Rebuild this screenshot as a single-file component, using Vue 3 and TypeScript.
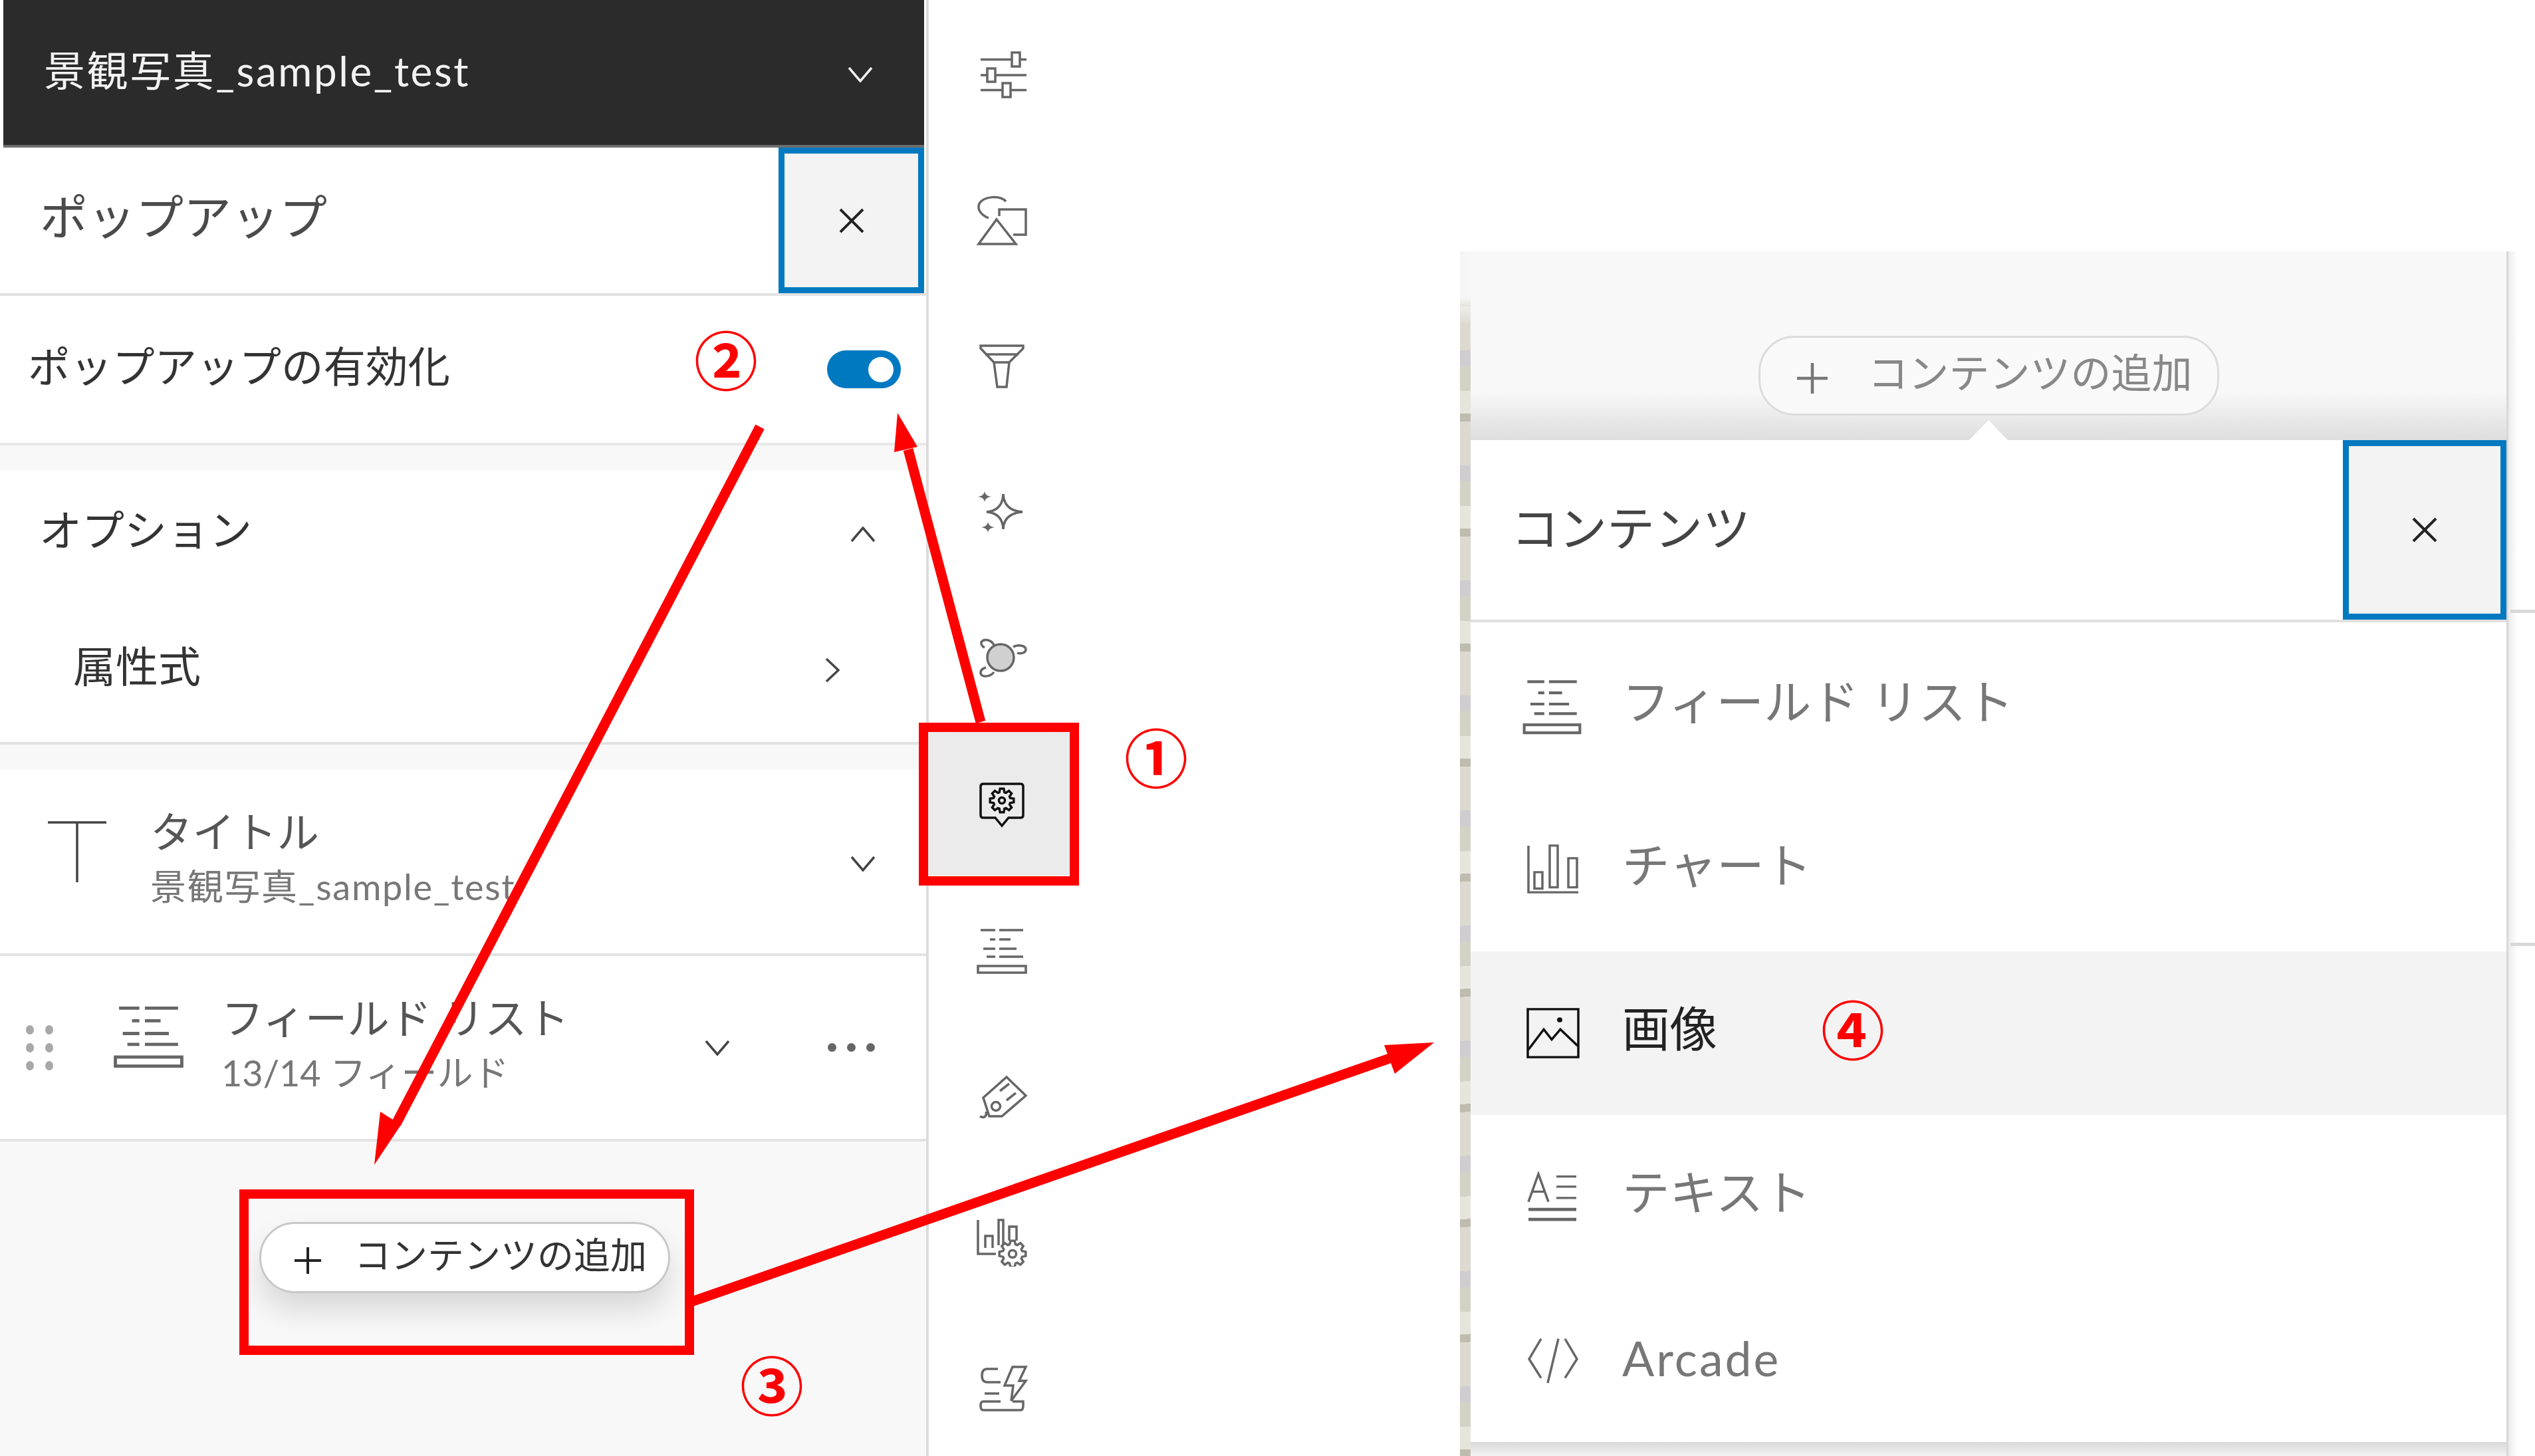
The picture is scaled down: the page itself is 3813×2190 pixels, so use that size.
<script setup lang="ts">
function gear(cx: number, cy: number, outer: number, inner: number, teeth = 8) {
  const pts: string[] = []
  const step = (Math.PI * 2) / teeth
  for (let i = 0; i < teeth; i++) {
    const a = i * step
    const corners = [
      [a - step * 0.38, inner],
      [a - step * 0.2, outer],
      [a + step * 0.2, outer],
      [a + step * 0.38, inner]
    ]
    for (const [t, r] of corners) {
      pts.push(`${(cx + Math.cos(t) * r).toFixed(1)},${(cy + Math.sin(t) * r).toFixed(1)}`)
    }
  }
  return pts.join(' ')
}

const listIcon = `
  <path d="M8 12H30M36 12H72M22 26H30M36 26H53M12 40H30M36 40H62M17 52H30M36 52H72" />
  <rect x="4" y="66" width="72" height="10" />`

const chartGearIcon = `
  <path d="M4 10V61H31M15 52V34H26V52M35 48V10H42V48M51 41V20H62V41" />
  <polygon points="${gear(56, 61, 20, 15)}" />
  <circle cx="56" cy="61" r="5.5" />`

const popupIcon = `
  <path d="M12 11H68Q72 11 72 15V58Q72 62 68 62H50L40 74L30 62H12Q8 62 8 58V15Q8 11 12 11Z" />
  <polygon points="${gear(40, 36, 18, 13)}" />
  <circle cx="40" cy="36" r="4.5" fill="currentColor" />`

const railIcons = [
  {
    name: 'settings',
    svg: `<path d="M8 16.5H55M67 16.5H77M8 40H18M30 40H77M8 62.5H41M53 62.5H77" />
      <rect x="55" y="6" width="12" height="21" /><rect x="18" y="30" width="12" height="20" /><rect x="41" y="52" width="12" height="21" />`
  },
  {
    name: 'symbology',
    svg: `<path d="M46 11C38 2 14 2 6 14C2 24 10 32 20 36" />
      <path d="M32 38L61 75H5Z" /><path d="M36 33V23H76V61H57" />`
  },
  {
    name: 'filter',
    svg: `<path d="M8 9H72V13L51 34L47 71H33L28 34L8 13Z" /><path d="M15 22H65M28 34H51" />`
  },
  {
    name: 'effects',
    svg: `<path d="M42 13Q43 38 71 40Q43 42 42 66Q41 42 17 40Q41 38 42 13Z" />
      <path class="solid" d="M14 9Q15 16 24 17Q15 18 14 25Q13 18 4 17Q13 16 14 9ZM19 55Q20 62 29 63Q20 64 19 71Q18 64 9 63Q18 62 19 55Z" />`
  },
  {
    name: 'cluster',
    svg: `<circle class="tint" cx="38" cy="40" r="20" />
      <path d="M28 21C24 13 12 11 9 17C8 21 12 24 14 25M57 24C65 20 76 22 76 28C76 33 68 35 63 33M28 62C22 70 8 70 8 63C8 58 12 56 16 55" />`
  },
  { name: 'popup', svg: popupIcon, active: true },
  { name: 'fields', svg: listIcon },
  {
    name: 'labels',
    svg: `<path d="M47 14L76 42L40 73H21L12 45Z" /><circle cx="31" cy="58" r="6.5" />
      <path d="M37 35L51 24M47 49L61 38M16 66C18 74 12 76 7 73" />`
  },
  { name: 'charts', svg: chartGearIcon },
  {
    name: 'forms',
    svg: `<path d="M34 15H18Q10 15 10 25Q10 35 18 35H38M14 52H36M38 64H12Q8 64 8 70Q8 77 12 77H68Q72 77 72 70V64H56" />
      <path d="M56 12H76L66 33H76L54 63L57 40H44Z" />`
  }
]

const menuItems = [
  {
    label: 'フィールド リスト',
    svg: listIcon,
    iconClass: 'menu-icon-list'
  },
  {
    label: 'チャート',
    svg: `<path d="M3 2V76H78M12 70V44H24V70ZM35 68V2H47V68ZM63 68V22H76V68Z" />`
  },
  {
    label: '画像',
    svg: `<rect x="2" y="2" width="76" height="76" /><path d="M3 66L26 34L38 50L51 34L77 60" /><circle class="solid" cx="50" cy="19" r="4" />`,
    active: true
  },
  {
    label: 'テキスト',
    svg: `<path d="M3 48L18 4L33 48M9 32H27M45 8H75M45 24H75M45 42H75" /><path class="thick" d="M3 60H75M3 76H75" />`
  },
  {
    label: 'Arcade',
    svg: `<path d="M22 6L4 38L22 68M58 6L76 38L58 68M48 6L32 76" />`,
    latin: true
  }
]

const numerals = [
  { text: '①', x: 1739, y: 1136 },
  { text: '②', x: 1092, y: 538 },
  { text: '③', x: 1161, y: 2080 },
  { text: '④', x: 2787, y: 1545 }
]

function numeralStyle(n: { x: number; y: number }) {
  return { left: `${n.x - 60}px`, top: `${n.y - 60}px` }
}
</script>

<template>
  <div class="page">
    <aside class="left-panel">
      <header class="layer-head">
        <span>景観写真_sample_test</span>
        <svg class="chevron light" viewBox="0 0 38 24" preserveAspectRatio="none"><path d="M2 2L19 22L36 2" /></svg>
      </header>

      <div class="panel-title">
        <h2>ポップアップ</h2>
        <button class="close-btn">
          <svg viewBox="0 0 38 38"><path d="M2 2L36 36M36 2L2 36" /></svg>
        </button>
      </div>

      <div class="toggle-row">
        <span>ポップアップの有効化</span>
        <div class="toggle"><i></i></div>
      </div>

      <div class="band"></div>

      <div class="options-row">
        <span>オプション</span>
        <svg class="chevron" viewBox="0 0 38 24" preserveAspectRatio="none"><path d="M2 22L19 2L36 22" /></svg>
      </div>
      <div class="expr-row">
        <span>属性式</span>
        <svg class="chevron-right" viewBox="0 0 22 38" preserveAspectRatio="none"><path d="M2 2L20 19L2 36" /></svg>
      </div>

      <div class="band"></div>

      <div class="title-row">
        <svg class="t-icon" viewBox="0 0 88 92" preserveAspectRatio="none"><path d="M0 2H88M44 2V92" /></svg>
        <div class="two-line">
          <div class="main-line">タイトル</div>
          <div class="sub-line">景観写真_sample_test</div>
        </div>
        <svg class="chevron" viewBox="0 0 38 24" preserveAspectRatio="none"><path d="M2 2L19 22L36 2" /></svg>
      </div>

      <div class="field-row">
        <div class="grip"><i v-for="n in 6" :key="n"></i></div>
        <svg class="field-icon icon" viewBox="0 0 80 80" preserveAspectRatio="none" v-html="listIcon"></svg>
        <div class="two-line">
          <div class="main-line">フィールド リスト</div>
          <div class="sub-line">13/14 フィールド</div>
        </div>
        <svg class="chevron field-chevron" viewBox="0 0 38 24" preserveAspectRatio="none"><path d="M2 2L19 22L36 2" /></svg>
        <div class="more"><i></i><i></i><i></i></div>
      </div>

      <div class="left-footer">
        <button class="add-btn">
          <svg viewBox="0 0 40 40"><path d="M20 0V40M0 20H40" /></svg>
          <span>コンテンツの追加</span>
        </button>
      </div>
    </aside>

    <nav class="rail">
      <div
        v-for="item in railIcons"
        :key="item.name"
        class="rail-cell"
        :class="{ active: item.active }"
      >
        <svg class="icon" viewBox="0 0 80 80" width="80" height="80" v-html="item.svg"></svg>
      </div>
    </nav>

    <section class="right">
      <div class="map-strip"></div>
      <div class="right-main">
        <div class="add-area">
          <button class="add-btn faded">
            <svg viewBox="0 0 40 40"><path d="M20 0V40M0 20H40" /></svg>
            <span>コンテンツの追加</span>
          </button>
          <div class="notch"></div>
        </div>
        <div class="popover-head">
          <h2>コンテンツ</h2>
          <button class="close-btn">
            <svg viewBox="0 0 38 38"><path d="M2 2L36 36M36 2L2 36" /></svg>
          </button>
        </div>
        <ul class="menu">
          <li v-for="m in menuItems" :key="m.label" :class="{ active: m.active, latin: m.latin }">
            <svg class="icon" :class="m.iconClass" viewBox="0 0 80 80" preserveAspectRatio="none" v-html="m.svg"></svg>
            <span>{{ m.label }}</span>
          </li>
        </ul>
        <div class="menu-end"></div>
      </div>
      <div class="gutter"><i></i><i></i></div>
    </section>

    <!-- red annotations drawn on top of the screenshot -->
    <svg class="marks" viewBox="0 0 3813 2190" width="3813" height="2190">
      <g fill="none" stroke="#ff0000">
        <rect x="1389" y="1094" width="227" height="231" stroke-width="14" />
        <rect x="367" y="1796" width="670" height="235" stroke-width="14" />
        <path d="M1475 1086L1366 676" stroke-width="15" />
        <path d="M1143 642L596 1690" stroke-width="15" />
        <path d="M1040 1958L2090 1592" stroke-width="15" />
      </g>
      <g fill="#ff0000">
        <polygon points="1350,621 1380,672 1345,680" />
        <polygon points="563,1752 572,1672 603,1692" />
        <polygon points="2157,1568 2098,1615 2082,1572" />
      </g>
    </svg>
    <span v-for="n in numerals" :key="n.text" class="numeral" :style="numeralStyle(n)">{{ n.text }}</span>
  </div>
</template>

<style scoped>
.page {
  position: relative;
  width: 3813px;
  height: 2190px;
  display: flex;
  overflow: hidden;
  background: #fff;
  font-family: Lato, "Noto Sans CJK JP", sans-serif;
  color: #4a4a4a;
}

h2 {
  margin: 0;
  font-weight: 400;
  font-size: 72px;
}

button {
  font-family: inherit;
  cursor: pointer;
}

/* left panel */
.left-panel {
  width: 1397px;
  height: 2190px;
  box-sizing: border-box;
  border-right: 4px solid #dcdcdc;
  display: flex;
  flex-direction: column;
  flex: none;
}

.layer-head {
  height: 222px;
  box-sizing: border-box;
  margin: 0 3px 0 5px;
  padding: 0 77px 0 61px;
  display: flex;
  align-items: center;
  justify-content: space-between;
  background: #2b2b2b;
  border-bottom: 4px solid #6e6e6e;
  color: #f2f2f2;
  font-size: 62px;
  letter-spacing: 2.6px;
}

.layer-head span {
  padding-bottom: 12px;
}

.layer-head .chevron {
  margin-top: 6px;
}

.chevron {
  width: 38px;
  height: 24px;
  flex: none;
}

.chevron path,
.chevron-right path,
.t-icon path {
  fill: none;
  stroke: #444;
  stroke-width: 3.5;
}

.chevron.light path {
  stroke: #f2f2f2;
}

.chevron-right {
  width: 22px;
  height: 38px;
}

.panel-title {
  height: 223px;
  box-sizing: border-box;
  border-bottom: 4px solid #e2e2e2;
  padding-left: 60px;
  display: flex;
  align-items: center;
  justify-content: space-between;
}

.panel-title h2 {
  padding-bottom: 20px;
}

.close-btn {
  height: 100%;
  width: 219px;
  box-sizing: border-box;
  margin-right: 3px;
  padding: 0;
  background: #f3f3f3;
  border: 9px solid #0079c1;
  display: flex;
  align-items: center;
  justify-content: center;
  flex: none;
}

.close-btn svg {
  width: 38px;
  height: 38px;
}

.close-btn path {
  fill: none;
  stroke: #222;
  stroke-width: 4;
}

.toggle-row {
  height: 225px;
  box-sizing: border-box;
  border-bottom: 4px solid #e8e8e8;
  padding: 0 38px 0 42px;
  display: flex;
  align-items: center;
  justify-content: space-between;
  font-size: 63.5px;
  color: #333;
}

.toggle-row span {
  padding-bottom: 18px;
}

.toggle {
  width: 111px;
  height: 57px;
  padding-right: 11px;
  box-sizing: border-box;
  border-radius: 29px;
  background: #0079c1;
  display: flex;
  align-items: center;
  justify-content: flex-end;
}

.toggle i {
  width: 38px;
  height: 38px;
  border-radius: 50%;
  background: #fff;
}

.band {
  height: 38px;
  background: #f8f8f8;
  flex: none;
}

.options-row {
  height: 192px;
  box-sizing: border-box;
  padding: 0 76px 0 59px;
  display: flex;
  align-items: center;
  justify-content: space-between;
  font-size: 64px;
  color: #333;
}

.options-row span {
  padding-bottom: 22px;
}

.expr-row {
  height: 220px;
  box-sizing: border-box;
  border-bottom: 4px solid #e2e2e2;
  padding: 0 130px 0 110px;
  display: flex;
  align-items: center;
  justify-content: space-between;
  font-size: 64px;
  color: #333;
}

.expr-row span {
  padding-bottom: 20px;
}

.title-row {
  height: 280px;
  box-sizing: border-box;
  border-bottom: 4px solid #e2e2e2;
  padding: 0 76px 0 72px;
  display: flex;
  align-items: center;
}

.t-icon {
  width: 88px;
  height: 92px;
  margin: 0 66px 30px 0;
  flex: none;
}

.two-line {
  flex: 1;
  min-width: 0;
  padding-bottom: 12px;
}

.main-line {
  font-size: 63.5px;
  line-height: 88px;
  color: #555;
}

.sub-line {
  font-size: 54px;
  line-height: 78px;
  letter-spacing: 1.7px;
  color: #777;
}

.title-row .chevron {
  margin-top: 6px;
}

.field-row {
  height: 279px;
  box-sizing: border-box;
  border-bottom: 4px solid #e2e2e2;
  padding: 0 77px 0 39px;
  display: flex;
  align-items: center;
}

.grip {
  width: 42px;
  margin-right: 87px;
  display: grid;
  grid-template-columns: 12px 12px;
  column-gap: 17px;
  row-gap: 13px;
}

.grip i {
  height: 14px;
  border-radius: 50%;
  background: #a8a8a8;
}

.field-icon {
  width: 111px;
  height: 109px;
  margin: 0 54px 42px 0;
}

.field-row .sub-line {
  letter-spacing: 0;
}

.field-chevron {
  margin-right: 147px;
}

.more {
  display: flex;
  gap: 16px;
}

.more i {
  width: 13px;
  height: 13px;
  border-radius: 50%;
  background: #666;
}

.left-footer {
  flex: 1;
  background: #f8f8f8;
  padding: 121px 0 0 390px;
}

.add-btn {
  width: 618px;
  height: 107px;
  box-sizing: border-box;
  padding: 0 0 0 50px;
  background: #fff;
  border: 3px solid #c8c8c8;
  border-radius: 54px;
  box-shadow: 0 26px 44px rgba(0, 0, 0, 0.13);
  display: flex;
  align-items: center;
  color: #333;
  font-size: 55px;
}

.add-btn svg {
  width: 40px;
  height: 48px;
  margin: 8px 50px 0 0;
  flex: none;
}

.add-btn span {
  padding-bottom: 16px;
  white-space: nowrap;
}

.add-btn path {
  fill: none;
  stroke: #222;
  stroke-width: 4;
}

/* icon rail */
.rail {
  width: 212px;
  padding-top: 3px;
  display: flex;
  flex-direction: column;
  flex: none;
}

.rail-cell {
  height: 219px;
  padding-left: 7px;
  box-sizing: border-box;
  display: flex;
  align-items: center;
  justify-content: center;
  flex: none;
}

.rail-cell.active {
  background: #ebebeb;
  color: #111;
}

.icon {
  color: #666;
  flex: none;
}

.icon :deep(path),
.icon :deep(rect),
.icon :deep(circle),
.icon :deep(polygon) {
  fill: none;
  stroke: currentColor;
  stroke-width: 3.5;
}

.icon :deep(.solid) {
  fill: currentColor;
  stroke: none;
}

.icon :deep(.tint) {
  fill: #d0d0d0;
}

.icon :deep(.thick) {
  stroke-width: 5;
}

.rail-cell.active .icon {
  color: #111;
}

/* right side */
.right {
  margin-left: auto;
  width: 1617px;
  padding-top: 378px;
  box-sizing: border-box;
  display: flex;
  flex: none;
}

.map-strip {
  width: 16px;
  background:
    linear-gradient(#f6f6f6 70px, #f6f6f600 110px),
    repeating-linear-gradient(178deg, #d3d2c6 0 37px, #e6e5dc 37px 71px, #bdbcae 71px 83px, #dcdad0 83px 149px, #cfcdd0 149px 173px);
  flex: none;
}

.right-main {
  width: 1561px;
  box-sizing: border-box;
  border-right: 3px solid #d8d8d8;
  display: flex;
  flex-direction: column;
  flex: none;
}

.add-area {
  height: 284px;
  padding-top: 127px;
  box-sizing: border-box;
  background: linear-gradient(#f8f8f8 74%, #dedede);
  display: flex;
  flex-direction: column;
  align-items: center;
}

.add-btn.faded {
  width: 693px;
  height: 120px;
  padding-left: 55px;
  background: #f9f9f9;
  border-color: #dcdcdc;
  box-shadow: none;
  font-size: 61px;
  color: #888;
  flex: none;
}

.add-btn.faded svg {
  width: 46px;
  height: 54px;
  margin-right: 61px;
}

.add-btn.faded path {
  stroke: #777;
}

.notch {
  width: 58px;
  height: 30px;
  margin-top: 7px;
  background: #fff;
  clip-path: polygon(50% 0, 100% 100%, 0 100%);
  flex: none;
}

.popover-head {
  height: 274px;
  box-sizing: border-box;
  border-bottom: 4px solid #e0e0e0;
  padding-left: 61px;
  display: flex;
  align-items: center;
  justify-content: space-between;
  color: #444;
}

.popover-head h2 {
  padding-bottom: 16px;
}

.popover-head .close-btn {
  width: 246px;
  margin-right: 0;
}

.menu {
  list-style: none;
  margin: 3px 0 0;
  padding: 0;
}

.menu li {
  height: 246px;
  box-sizing: border-box;
  padding-left: 84px;
  display: flex;
  align-items: center;
  font-size: 71.5px;
  color: #777;
}

.menu li span {
  padding-bottom: 22px;
}

.menu li.latin span {
  padding-bottom: 8px;
  letter-spacing: 3px;
}

.menu li .icon {
  width: 80px;
  height: 76px;
  margin-right: 64px;
}

.menu li .menu-icon-list {
  width: 93px;
  height: 96px;
  margin: 0 59px 6px -8px;
}

.menu li.active {
  background: #f3f3f3;
  color: #222;
}

.menu li.active .icon {
  color: #111;
}

.menu-end {
  flex: 1;
  background: linear-gradient(#d8d8d8, #f4f4f4);
}

.gutter {
  flex: 1;
  padding-top: 539px;
  background: linear-gradient(90deg, #ececec, #fff 14px);
}

.gutter i {
  display: block;
  height: 5px;
  margin-left: 3px;
  background: #d8d8d8;
}

.gutter i + i {
  margin-top: 496px;
}

/* annotations */
.marks {
  position: absolute;
  left: 0;
  top: 0;
  pointer-events: none;
}

.numeral {
  position: absolute;
  width: 120px;
  height: 120px;
  line-height: 120px;
  text-align: center;
  font-family: "Noto Sans CJK JP", sans-serif;
  font-weight: 700;
  font-size: 96px;
  color: #ff0000;
}
</style>
